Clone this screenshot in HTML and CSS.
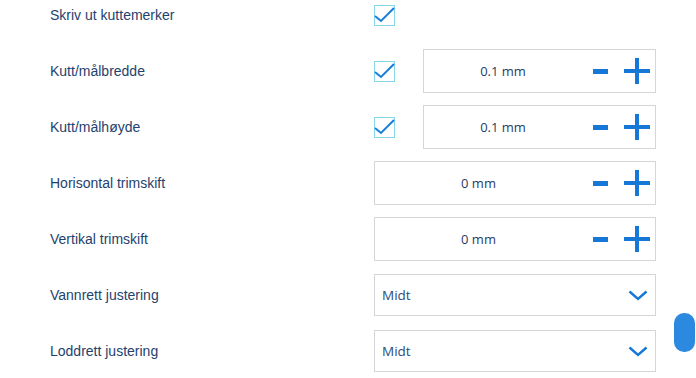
FILE: index.html
```html
<!DOCTYPE html>
<html lang="no">
<head>
  <meta charset="UTF-8">
  <title>Utskriftsinnstillinger</title>
  <link rel="stylesheet" href="styles.css">
</head>
<body>
  <div class="settings">
    <div class="row">
      <label class="label">Skriv ut kuttemerker</label>
      <div class="control">
        <span class="check"><svg width="21" height="21" viewBox="0 0 21 21"><path d="M1 12 L7 17 L20 4" fill="none" stroke="#1a7fd9" stroke-width="2"/></svg></span>
      </div>
    </div>

    <div class="row">
      <label class="label">Kutt/målbredde</label>
      <div class="control">
        <span class="check"><svg width="21" height="21" viewBox="0 0 21 21"><path d="M1 12 L7 17 L20 4" fill="none" stroke="#1a7fd9" stroke-width="2"/></svg></span>
        <div class="stepper">
          <span class="value">0.1 mm</span>
          <span class="btn minus"></span>
          <span class="btn plus"></span>
        </div>
      </div>
    </div>

    <div class="row">
      <label class="label">Kutt/målhøyde</label>
      <div class="control">
        <span class="check"><svg width="21" height="21" viewBox="0 0 21 21"><path d="M1 12 L7 17 L20 4" fill="none" stroke="#1a7fd9" stroke-width="2"/></svg></span>
        <div class="stepper">
          <span class="value">0.1 mm</span>
          <span class="btn minus"></span>
          <span class="btn plus"></span>
        </div>
      </div>
    </div>

    <div class="row">
      <label class="label">Horisontal trimskift</label>
      <div class="control">
        <div class="stepper">
          <span class="value">0 mm</span>
          <span class="btn minus"></span>
          <span class="btn plus"></span>
        </div>
      </div>
    </div>

    <div class="row">
      <label class="label">Vertikal trimskift</label>
      <div class="control">
        <div class="stepper">
          <span class="value">0 mm</span>
          <span class="btn minus"></span>
          <span class="btn plus"></span>
        </div>
      </div>
    </div>

    <div class="row">
      <label class="label">Vannrett justering</label>
      <div class="control">
        <div class="select">
          <span class="option">Midt</span>
          <svg class="chevron" width="20" height="11" viewBox="0 0 20 11"><path d="M1.5 1.5 L10 9 L18.5 1.5" fill="none" stroke="#1577d6" stroke-width="2.4"/></svg>
        </div>
      </div>
    </div>

    <div class="row">
      <label class="label">Loddrett justering</label>
      <div class="control">
        <div class="select">
          <span class="option">Midt</span>
          <svg class="chevron" width="20" height="11" viewBox="0 0 20 11"><path d="M1.5 1.5 L10 9 L18.5 1.5" fill="none" stroke="#1577d6" stroke-width="2.4"/></svg>
        </div>
      </div>
    </div>
  </div>

  <div class="scroll-thumb"></div>
</body>
</html>
```

FILE: styles.css
```css
body {
  margin: 0;
  background-color: #ffffff;
  font-family: 'Liberation Sans', Arial, sans-serif;
  overflow: hidden;
}

/* the list is scrolled a little, first row is cut at the top */
.settings {
  margin-top: -13px;
  padding-left: 50px;
}

.row {
  display: flex;
  align-items: center;
  height: 56px;
}

.label {
  width: 324px;
  font-size: 14px;
  color: #1f426d;
}

.control {
  display: flex;
  align-items: center;
  width: 282px;
}

.check {
  display: block;
  width: 21px;
  height: 21px;
  box-sizing: border-box;
  border: 1.5px solid #88d6ea;
  margin-right: 28px;
}

.check svg {
  display: block;
  margin: -1.5px 0 0 -1.5px;
}

.stepper {
  flex: 1;
  display: flex;
  align-items: center;
  height: 44px;
  box-sizing: border-box;
  border: 1px solid #d6d6d6;
  padding-right: 5px;
}

.value {
  flex: 1;
  text-align: center;
  font-family: 'Open Sans', sans-serif;
  font-size: 13px;
  color: #1f3d63;
}

.btn {
  position: relative;
  display: block;
  height: 26px;
}

.minus {
  width: 15px;
  margin-left: 11px;
  margin-right: 16px;
}

.plus {
  width: 26px;
}

.minus::before,
.plus::before,
.plus::after {
  content: "";
  position: absolute;
  background-color: #1577d6;
}

.minus::before {
  left: 0;
  top: 11px;
  width: 15px;
  height: 4.5px;
}

.plus::before {
  left: 0;
  top: 11px;
  width: 26px;
  height: 4px;
}

.plus::after {
  left: 11px;
  top: 0;
  width: 4px;
  height: 26px;
}

.select {
  flex: 1;
  display: flex;
  align-items: center;
  justify-content: space-between;
  height: 42px;
  box-sizing: border-box;
  border: 1px solid #d6d6d6;
  padding: 0 7px 0 7px;
}

.option {
  font-family: 'Open Sans', sans-serif;
  font-size: 13.5px;
  color: #2a4d78;
}

.chevron {
  display: block;
}

.scroll-thumb {
  position: absolute;
  left: 674px;
  top: 313px;
  width: 21px;
  height: 39px;
  border-radius: 10px;
  background-color: #2b8ae0;
}
```
